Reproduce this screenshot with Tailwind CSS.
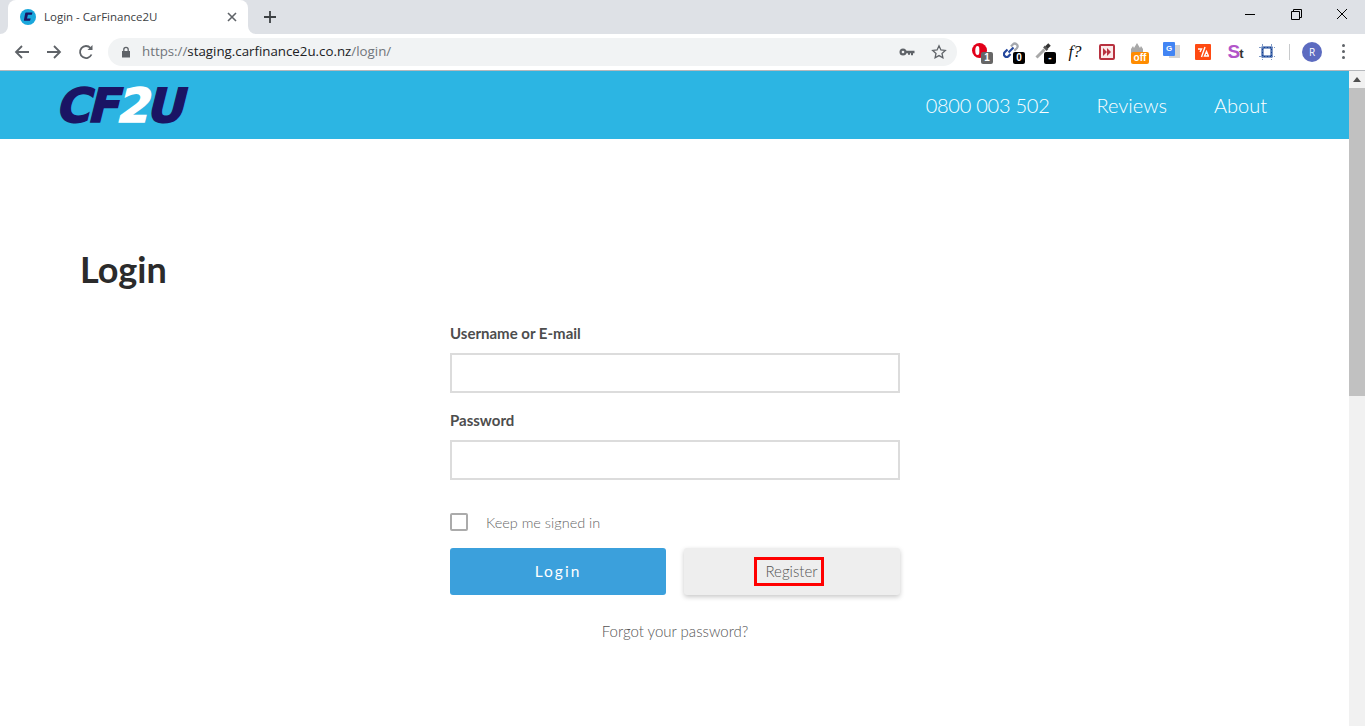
<!DOCTYPE html>
<html>
<head>
<meta charset="utf-8">
<title>Login - CarFinance2U</title>
<script src="https://cdn.jsdelivr.net/npm/@tailwindcss/browser@4"></script>
</head>
<body class="h-[726px] w-[1365px] overflow-hidden bg-white font-['Lato',sans-serif]">
<div class="flex h-[34px] items-end bg-[#dee1e6] pl-2">
  <div class="relative flex h-[34px] w-[240px] items-center rounded-t-lg bg-white pl-3 pr-2">
    <svg class="absolute bottom-0 left-[-8px] h-2 w-2" viewBox="0 0 8 8"><path d="M8 0v8H0a8 8 0 0 0 8-8z" fill="#fff"/></svg>
    <svg class="absolute bottom-0 right-[-8px] h-2 w-2" viewBox="0 0 8 8"><path d="M0 0v8h8a8 8 0 0 1-8-8z" fill="#fff"/></svg>
    <svg class="h-4 w-4 shrink-0" viewBox="0 0 16 16"><circle cx="8" cy="8" r="8" fill="#1aa7dc"/><path d="M6 3.500h6.500l-.7 2.300H7.900l-.9 3.600h3.700l-.7 2.300H4.400a.6.6 0 0 1-.5-.8l1.300-6.600a1 1 0 0 1 .8-.8z" fill="#1a1464"/></svg>
    <span class="ml-2 font-['Open_Sans',sans-serif] text-[11.500px] text-[#3c4043]">Login - CarFinance2U</span>
    <svg class="ml-auto h-4 w-4" viewBox="0 0 16 16" fill="none" stroke="#5f6368" stroke-width="1.600"><path d="M4 4l8 8M12 4l-8 8"/></svg>
  </div>
  <svg class="mb-[9px] ml-[14px] h-4 w-4" viewBox="0 0 16 16" fill="none" stroke="#3c4043" stroke-width="1.800"><path d="M8 2v12M2 8h12"/></svg>
  <div class="ml-auto flex h-full items-center">
    <div class="flex h-full w-[46px] items-center justify-center pb-[6px]"><svg class="h-[10px] w-[10px]" viewBox="0 0 10 10" stroke="#000"><path d="M0 5.500h10"/></svg></div>
    <div class="flex h-full w-[46px] items-center justify-center pb-[6px]"><svg class="h-[11px] w-[11px]" viewBox="0 0 11 11" fill="none" stroke="#000"><path d="M.5 2.500h8v8h-8zM2.500 2.500v-2h8v8h-2"/></svg></div>
    <div class="flex h-full w-[46px] items-center justify-center pb-[6px]"><svg class="h-3 w-3" viewBox="0 0 12 12" fill="none" stroke="#000"><path d="M1 1l10 10M11 1L1 11"/></svg></div>
  </div>
</div>
<div class="flex h-[37px] items-center border-b border-[#b5b8bc] bg-white pb-[1px]">
  <svg class="ml-[14px] h-4 w-4" viewBox="0 0 16 16" fill="none" stroke="#5f6368" stroke-width="1.800"><path d="M15 8H2M8 2L2 8l6 6"/></svg>
  <svg class="ml-4 h-4 w-4" viewBox="0 0 16 16" fill="none" stroke="#5f6368" stroke-width="1.800"><path d="M1 8h13M8 2l6 6-6 6"/></svg>
  <svg class="ml-4 h-4 w-4" viewBox="0 0 16 16" fill="none" stroke="#5f6368" stroke-width="1.800"><path d="M13.500 10.500A6 6 0 1 1 12.500 4"/><path d="M14.500 1v5h-5z" fill="#5f6368" stroke="none"/></svg>
  <div class="ml-[14px] flex h-7 w-[849px] items-center rounded-full bg-[#f1f3f4] pl-[12px] pr-[10px]">
    <svg class="h-3 w-3" viewBox="0 0 12 12"><path d="M2 5h8v6.500H2z" fill="#5f6368"/><path d="M3.800 5V3.500a2.200 2.200 0 0 1 4.400 0V5" fill="none" stroke="#5f6368" stroke-width="1.300"/></svg>
    <span class="ml-[10px] font-['Open_Sans',sans-serif] text-[13.300px] leading-none text-[#70757a]">https://<span class="text-[#202124]">staging.carfinance2u.co.nz</span>/login/</span>
    <svg class="ml-auto h-3 w-4" viewBox="0 0 16 12" fill="#5f6368"><circle cx="4" cy="6" r="3.500"/><path d="M6 4.800h9.500v2.400H14v2h-2v-2h-1v1.500H9V7.200H6z"/><circle cx="4" cy="6" r="1.300" fill="#f1f3f4"/></svg>
    <svg class="ml-[16px] h-4 w-4" viewBox="0 0 16 16" fill="none" stroke="#5f6368" stroke-width="1.300"><path d="M8 1.800l1.900 4.100 4.400.5-3.300 3 .9 4.400L8 11.600 4.100 13.800l.9-4.400-3.300-3 4.400-.5z"/></svg>
  </div>
  <div class="ml-[6px] flex h-full items-center">
    <div class="relative flex h-full w-8 items-center justify-center">
      <svg class="absolute left-2 top-[8px] h-[17px] w-[17px]" viewBox="0 0 17 17"><path d="M8.500 1a7.500 7.500 0 1 0 0 15 7.500 7.500 0 0 0 0-15z" fill="#e2001a"/><ellipse cx="6.500" cy="8.500" rx="2.200" ry="4.500" fill="#fff"/><path d="M8.500 4.500l1 3 1.500-1.500 2 1.500v7H8.500z" fill="#e2001a"/></svg>
      <span class="absolute left-[18px] top-[18px] flex h-3 w-3 items-center justify-center rounded-[2px] bg-[#666] font-['Liberation_Sans',sans-serif] text-[10px] font-bold leading-none text-white">1</span>
    </div>
    <div class="relative flex h-full w-8 items-center justify-center">
      <svg class="absolute left-2 top-[8px] h-4 w-4" viewBox="0 0 16 16" fill="none" stroke-width="2.200"><path d="M8 4.500l1.800-2a2.700 2.700 0 0 1 4 3.700l-2.500 2.500" stroke="#a5a8ad"/><path d="M7.500 12l-1.800 2a2.700 2.700 0 0 1-4-3.700L4.500 7.500" stroke="#24479d"/><path d="M5.500 10.500l5-5" stroke="#24479d"/></svg>
      <span class="absolute left-[18px] top-[18px] flex h-3 w-3 items-center justify-center rounded-[2px] bg-black font-['Liberation_Sans',sans-serif] text-[10px] font-bold leading-none text-white">0</span>
    </div>
    <div class="relative flex h-full w-8 items-center justify-center">
      <svg class="absolute left-[8px] top-[8px] h-[17px] w-[17px]" viewBox="0 0 17 17" fill="none"><path d="M1.500 15.500l8-8" stroke="#a8a8a8" stroke-width="3"/><path d="M9 4.500l3.500 3.500" stroke="#555" stroke-width="2.500"/><path d="M11.500 5.500l3-3" stroke="#333" stroke-width="3.500"/></svg>
      <span class="absolute left-[17px] top-[18px] flex h-3 w-3 items-center justify-center rounded-[2px] bg-black font-['Liberation_Sans',sans-serif] text-[10px] font-bold leading-none text-white">-</span>
    </div>
    <div class="flex h-full w-8 items-center justify-center"><span class="font-['Liberation_Serif',serif] text-[17px] italic leading-none text-[#111]">f?</span></div>
    <div class="flex h-full w-8 items-center justify-center">
      <div class="flex h-4 w-4 items-center justify-center rounded-[2px] border-2 border-[#b8313f] bg-[#fbeaea]">
        <svg class="h-2 w-2" viewBox="0 0 8 8" fill="#b8313f"><path d="M0 0l4 4-4 4zM4 0l4 4-4 4z"/></svg>
      </div>
    </div>
    <div class="relative flex h-full w-8 items-center justify-center">
      <svg class="absolute left-[6px] top-[8px] h-4 w-4" viewBox="0 0 16 16"><path d="M2 15V7l2-3 1 2 3-5 3 5 1-2 2 3v8z" fill="#a8a8a8"/></svg>
      <span class="absolute left-[8px] top-[18px] flex h-3 w-[18px] items-center justify-center rounded-[2px] bg-[#ff8c00] font-['Liberation_Sans',sans-serif] text-[10px] font-bold leading-none text-white">off</span>
    </div>
    <div class="relative flex h-full w-8 items-center justify-center">
      <div class="absolute left-[14px] top-[11px] h-[13px] w-[11px] bg-[#d4d4d4]"></div>
      <div class="absolute left-2 top-[8px] flex h-[14px] w-[12px] items-center justify-center rounded-[1px] bg-[#4285f4] font-['Liberation_Sans',sans-serif] text-[8px] font-bold leading-none text-white">G</div>
    </div>
    <div class="flex h-full w-8 items-center justify-center">
      <div class="flex h-4 w-4 items-center justify-center rounded-[1px] bg-[#ff4a12]">
        <svg class="h-3 w-3" viewBox="0 0 12 12" fill="none" stroke="#fff" stroke-width="1.400"><path d="M1 3h3.500L3 6M8 1L4.500 11M7.500 10H11.500L9.500 5.500z"/></svg>
      </div>
    </div>
    <div class="flex h-full w-8 items-center justify-center"><span class="font-['Liberation_Sans',sans-serif] text-[19px] font-bold leading-none tracking-[-1px] text-[#b254c9]">S<span class="text-[13px] text-[#333]">t</span></span></div>
    <div class="flex h-full w-8 items-center justify-center">
      <svg class="h-4 w-4" viewBox="0 0 16 16" fill="none"><path d="M3.500 3.500h9v9h-9z" stroke="#123f94" stroke-width="2"/><path d="M3.500 0v16M12.500 0v16M0 3.500h16M0 12.500h16" stroke="#5d7fb8" stroke-width=".8" stroke-dasharray="2 1"/></svg>
    </div>
    <div class="ml-[6px] h-4 w-px bg-[#c8cacc]"></div>
    <div class="ml-3 flex h-5 w-5 items-center justify-center rounded-full bg-[#5c6bc0] font-['Open_Sans',sans-serif] text-[10px] leading-none text-white">R</div>
    <div class="ml-[20px] flex flex-col gap-[3px]">
      <i class="block h-[3px] w-[3px] rounded-full bg-[#5f6368]"></i>
      <i class="block h-[3px] w-[3px] rounded-full bg-[#5f6368]"></i>
      <i class="block h-[3px] w-[3px] rounded-full bg-[#5f6368]"></i>
    </div>
  </div>
</div>
<div class="flex h-[655px]">
  <main class="w-[1349px] shrink-0">
    <header class="flex h-[68px] items-center bg-[#2cb5e3] pl-[59px] pr-[82px]">
      <div class="mt-[2px] flex h-[50px] -skew-x-[14deg] items-center font-['DejaVu_Sans',sans-serif] text-[47px] font-bold leading-[50px] tracking-[-3px] text-[#1a1464] [-webkit-text-stroke:1.500px_#1a1464]">CF<span class="text-white [-webkit-text-stroke:1.500px_#ffffff]">2</span>U</div>
      <nav class="ml-auto flex items-center gap-[47px] text-xl font-light text-white">
        <a class="tracking-[-0.25px]">0800 003 502</a><a>Reviews</a><a>About</a>
      </nav>
    </header>
    <h1 class="ml-[80px] mt-[106px] text-4xl font-bold leading-[48px] text-[#2b2b2b]">Login</h1>
    <form class="ml-[450px] mt-[29px] w-[450px]">
      <label class="block text-[15px] font-bold leading-[22px] text-[#4d4d4d]">Username or E-mail</label>
      <div class="mt-[9px] h-10 border-2 border-[#dcdcdc] bg-white"></div>
      <label class="mt-[16px] block text-[15px] font-bold leading-[22px] text-[#4d4d4d]">Password</label>
      <div class="mt-[9px] h-10 border-2 border-[#dcdcdc] bg-white"></div>
      <div class="mt-[32px] flex h-[20px] items-center">
        <div class="h-[18px] w-[18px] rounded-[2px] border-2 border-[#ababab] bg-white"></div>
        <span class="ml-[18px] pt-[1px] text-[14.500px] font-light text-[#666]">Keep me signed in</span>
      </div>
      <div class="mt-[16px] flex justify-between">
        <div class="flex h-[47px] w-[216px] items-center justify-center rounded-[3px] bg-[#3ba0dc] text-[15.500px] font-normal tracking-[2px] text-white">Login</div>
        <div class="flex h-[47px] w-[216px] items-center justify-center rounded-[3px] bg-[#eeeeee] shadow-[0_2px_5px_rgba(0,0,0,0.22)]">
          <span class="mr-[6px] border-[3px] border-[#ff0000] pl-2 pr-[3px] text-[15px] font-light leading-[23px] text-[#555]">Register</span>
        </div>
      </div>
      <p class="mt-[26px] text-center text-[15px] font-light leading-5 text-[#555]">Forgot your password?</p>
    </form>
  </main>
  <aside class="flex w-4 flex-col bg-[#f1f1f1]">
    <div class="flex h-[17px] items-center justify-center"><svg class="h-[5px] w-2" viewBox="0 0 8 5" fill="#505050"><path d="M4 0l4 5H0z"/></svg></div>
    <div class="h-[308px] bg-[#c1c1c1]"></div>
  </aside>
</div>
</body>
</html>
